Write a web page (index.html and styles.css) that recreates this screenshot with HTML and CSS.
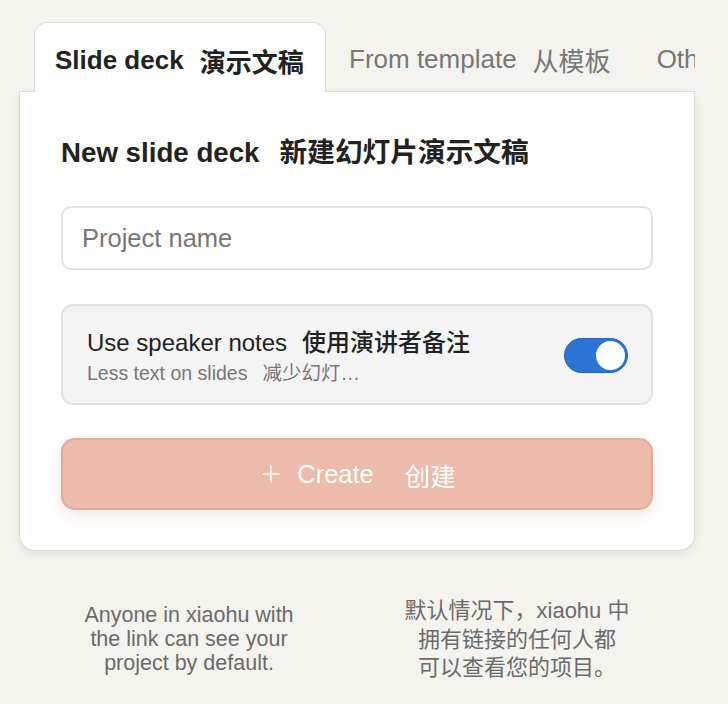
FILE: index.html
```html
<!DOCTYPE html>
<html lang="en">
<head>
<meta charset="utf-8">
<title>New slide deck</title>
<link rel="stylesheet" href="styles.css">
</head>
<body>
<div class="page">
  <div class="tabs">
    <div class="tab-lead"></div>
    <div class="tab tab-active"><span>Slide deck</span><span class="zh">演示文稿</span></div>
    <div class="tab-rest">
      <div class="tab"><span>From template</span><span class="zh">从模板</span></div>
      <div class="tab"><span>Other</span><span class="zh">其他</span></div>
    </div>
  </div>
  <div class="card">
    <h1 class="title"><span>New slide deck</span><span class="zh">新建幻灯片演示文稿</span></h1>
    <input class="name-input" type="text" placeholder="Project name">
    <div class="option">
      <div class="option-text">
        <div class="option-title"><span>Use speaker notes</span><span class="zh">使用演讲者备注</span></div>
        <div class="option-sub"><span>Less text on slides</span><span class="zh">减少幻灯…</span></div>
      </div>
      <div class="toggle"><div class="knob"></div></div>
    </div>
    <button class="create" type="button">
      <svg class="plus" width="20" height="20" viewBox="0 0 20 20" aria-hidden="true"><path d="M10 1.5V18.5M1.5 10H18.5" stroke="#fff" stroke-width="1.6" fill="none"/></svg>
      <span class="create-en">Create</span><span class="create-zh">创建</span>
    </button>
  </div>
  <div class="footer">
    <p class="note note-en">Anyone in xiaohu with the link can see your project by default.</p>
    <p class="note note-zh">默认情况下，xiaohu 中<br>拥有链接的任何人都<br>可以查看您的项目。</p>
  </div>
</div>
</body>
</html>
```
FILE: styles.css
```css
* { box-sizing: border-box; }
body {
  margin: 0;
  background: #f4f3ee;
  font-family: "Liberation Sans", "Noto Sans CJK SC", sans-serif;
  color: #222;
}
.page {
  width: 676px;
  margin-left: 19px;
  padding-top: 22px;
}
.tabs {
  display: flex;
  height: 70px;
}
.tab-lead {
  width: 15px;
  border-bottom: 1px solid #dcdcdc;
}
.tab {
  display: flex;
  align-items: center;
  white-space: nowrap;
  font-size: 26px;
  padding-top: 5px;
}
.tab .zh { margin-left: 16px; }
.tab-active {
  width: 292px;
  padding-left: 20px;
  background: #fff;
  border: 1.5px solid #dcdcdc;
  border-bottom: none;
  border-radius: 13px 13px 0 0;
  font-weight: bold;
  color: #222;
}
.tab-rest {
  flex: 1;
  min-width: 0;
  display: flex;
  overflow: hidden;
  border-bottom: 1px solid #dcdcdc;
  color: #777;
}
.tab-rest .tab { padding-left: 23px; padding-right: 23px; }
.card {
  background: #fff;
  border: 1px solid #dcdcdc;
  border-top: none;
  border-radius: 0 0 16px 16px;
  box-shadow: 0 3px 8px rgba(0, 0, 0, 0.08);
  padding: 44px 41px 40px;
}
.title {
  margin: 0;
  font-size: 27.7px;
  line-height: 34px;
  font-weight: bold;
  color: #222;
  white-space: nowrap;
}
.title .zh { margin-left: 20px; }
.name-input {
  display: block;
  width: 100%;
  height: 64px;
  margin-top: 36px;
  border: 2px solid #e2e2e2;
  border-radius: 10px;
  padding: 0 19px;
  font-family: "Liberation Sans", "Noto Sans CJK SC", sans-serif;
  font-size: 25.5px;
  color: #222;
  background: #fff;
  outline: none;
}
.name-input::placeholder { color: #767676; }
.option {
  margin-top: 34px;
  height: 101px;
  display: flex;
  align-items: center;
  justify-content: space-between;
  padding: 5px 23px 0 24px;
  background: #f4f4f4;
  border: 2px solid #e2e2e2;
  border-radius: 12px;
}
.option-title {
  font-size: 24px;
  line-height: 30px;
  color: #222;
  white-space: nowrap;
}
.option-title .zh { margin-left: 15px; font-weight: 500; }
.option-sub {
  margin-top: 2px;
  font-size: 19.5px;
  line-height: 26px;
  color: #777;
  white-space: nowrap;
}
.option-sub .zh { margin-left: 15px; }
.toggle {
  width: 64px;
  height: 35px;
  border-radius: 18px;
  background: #2b74d4;
  border: 1.5px solid #2465c2;
  display: flex;
  align-items: center;
  justify-content: flex-end;
  padding-right: 2px;
  margin-top: -4px;
}
.knob {
  width: 29px;
  height: 29px;
  border-radius: 50%;
  background: #fff;
}
.create {
  margin-top: 33px;
  width: 100%;
  height: 72px;
  display: flex;
  align-items: center;
  justify-content: center;
  background: #ecbbab;
  border: 2px solid #e4aa9a;
  border-radius: 14px;
  box-shadow: 0 6px 14px rgba(214, 150, 130, 0.22);
  color: #fff;
  font-family: "Liberation Sans", "Noto Sans CJK SC", sans-serif;
  font-size: 25.5px;
  padding: 0 0 0 3px;
}
.plus { margin-right: 16px; }
.create-zh { margin-left: 31px; }
.footer {
  display: flex;
  align-items: flex-start;
  gap: 96px;
  padding-left: 54px;
  margin-top: 52px;
}
.note {
  margin: 0;
  width: 232px;
  text-align: center;
  color: #6b6b6b;
}
.note-en { font-size: 21.5px; line-height: 24px; }
.note-zh { font-size: 22px; line-height: 28.5px; margin-top: -6px; }
```
